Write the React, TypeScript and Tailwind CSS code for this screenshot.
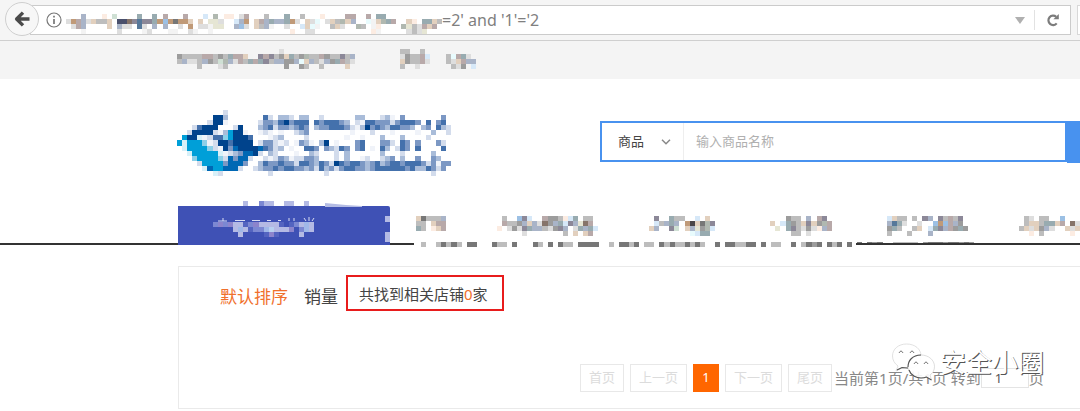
import React from "react";

const palette: Record<string, string> = {
  a: "#f3f3f3", b: "#dedede", c: "#bdbdbd", d: "#9c9c9c", e: "#777777", f: "#4a4648",
  g: "#cfe0d4", h: "#98abb0", i: "#56789a", j: "#4a506c", k: "#a9b4c8", l: "#d6e8f8",
  m: "#9cc0e4", n: "#8c8898", o: "#b8a9a9", p: "#fcece2", q: "#e2d0be", r: "#c09a78",
  s: "#86746a", t: "#e6e6d4", u: "#e8fbfd", v: "#b0b8b0",
  A: "#00438c", B: "#0068b4", C: "#009fd8", D: "#8ccfe8", E: "#d8f0f8",
  F: "#4471ac", G: "#7c98c4", H: "#a9bcd9", I: "#d3dcec", J: "#f0f3f9",
  K: "#7c88d2", L: "#b4bae4", M: "#8c84cc", N: "#5464c0", O: "#a0b8e8", P: "#b8d0f0",
};

type MosaicProps = { rows: string[]; cols: number; className: string };

/* Each row lists runs such as "12abc": a start column, then one colour key per cell. */
function Mosaic({ rows, cols, className }: MosaicProps) {
  return (
    <svg viewBox={`0 0 ${cols} ${rows.length}`} preserveAspectRatio="none" shapeRendering="crispEdges" className={className} aria-hidden="true">
      {rows.flatMap((row, y) =>
        row.split(" ").filter(Boolean).flatMap((run) => {
          const start = parseInt(run, 10);
          const keys = run.replace(/^\d+/, "");
          return [...keys].map((k, i) => (
            <rect key={`${y}-${start + i}`} x={start + i} y={y} width={1} height={1} fill={palette[k]} />
          ));
        })
      )}
    </svg>
  );
}

const addressRows = [
  "3k 7p 9g 14h 17h 19o 23o 27l 29v 31pp 34bo 39c 43h 46c 50p 55oo 59o 61hh",
  "0b 1rokb 5qccq 10jjsni 15nnhrmrerrq 26q 28ttb 33lkr 37qokhkk 43hrb 47qbu 51bqcvqk 59uaqvho 67qp 70hhqcc",
  "1bok 8q 10kbb 14ib 17k 19k 22b 24r 26bb 28att 33kmb 37qck 40a 43b 46lqua 52cqb 57vc 60ap 66vtcboqo",
  "3a 10b 15ab 20aa 24ba 28a 44p 47bb 60pa 67bcbt",
];

const topLeftRows = [
  "20b",
  "0dccccoocdchooqa 16noncdqhcdvccodccnck",
  "0ckbbckdcgvkbochohnckkddkuqkcbkdhocb",
  "4c 8bca 21d 24dc 28c 33q",
];
const topRightRows = ["0cc 4c", "0bdccol 9cuohb", "0qdccob 9cbqokk", "0c 3b 10cbd 14l"];

const logoRows = [
  "9I",
  "7AAH 17F 18I 20HHI 24HH 28I 35HH 40IH 42J 44G 52G",
  "6IAAJ 16IGGHFAGFFF 27FGFFFGH 35IJFFGGGIGFFFG 49F 51GF",
  "3IFAAA 11IA 16HGFIGGHGFG 27HGGFFFG 34IJHAGFGHFFGGH 48HG 51FH 53I",
  "2IAAAAIJHCAAJ 16JIJ 20J 23IHG 34J 38I 42J 47J 50H 53I",
  "1CAAEJIFFDCAAAF 18JIH 25I 33J 36J 40H 44H 49I",
  "0CECCCDJIAAFAAAA 16IGGI 20JI 23JGHJ 28HA 31J 35GF 40GGI 44FG 47G 51GI",
  "1ECCCCDIJAGBAAAAB 17FGIH 22J 25FFG 29GHIF 33G 35GF 38J 40FH 43IFG 47F 52F",
  "2ECCCCCEJIHGBBAI 18HI 23J 26HI 31I 33H 40H 44I 50H",
  "3DCCCCDIBGBBI 17IJIGHJI 24IGGH 31I 33H 36JI 40IHG 44H 47G 50GH",
  "4ICCCCGBBBG 16HFGGFGGIFFGHFGIAFGFFGHGFHGFFGFFFGIGJHG 52G",
  "5EBCCBBBI 15IHGGFGFFGGHGIFHGIGFFGGHGFFFFFFGFHHFGIG",
  "7EI 18I 29I 50I",
];

const navItems = [
  { id: 1, cols: 6, box: "ml-[25px] w-[30px]", rows: ["0qeccck", "0cc 3qoo", "0hc 3pqo", ""] },
  { id: 2, cols: 20, box: "ml-[51px] w-[101px]", rows: ["1c 4mnl 9oddc 13plh 17cc", "1occdkqkbsdkhlnkt 17so", "0p 2bdbnhkkcbdnk 15bhkhl", "5b 13c 15q 17qo"] },
  { id: 3, cols: 13, box: "ml-[51px] w-[66px]", rows: ["1n 4hcc 9l 11q", "1lckhk 7rfqevn", "0qk 4ng 7qktdvl", "8ul 10hh"] },
  { id: 4, cols: 12, box: "ml-[55px] w-[62px]", rows: ["3dcc 7k 9on", "0q 2lhdcqnqdvo", "1t 3hncbdbpko", "4cc 7b"] },
  { id: 5, cols: 16, box: "ml-[55px] w-[81px]", rows: ["0lqcc 5c 7nk 10ncocn", "0kihb 6b 9mrmokd", "0dhc 5cq 8lhnkodhd", "0c 4c 8k"] },
  { id: 6, cols: 13, box: "ml-[51px] w-[66px]", rows: ["1cb 4cc 8m", "1cqqchhqo 10sbq", "0cqb 3qdkb 9qbqc", "2p 4c 10p"] },
];

const rule = ["0c 3cecec 9ee 14ecc 18e 22ec 25e 27ecc 31eeee 37c 39eece 44cc 47ececcecec 58e 60eeccee 67e 69cc 73e 75cede 80ece 84e 86e 88ede 93ccccc 99deeedeeded"];

const tabRows = [
  "6L 9K 10LL 14LL 18L",
  "",
  "",
  "34L",
  "0KMKMLLNKMLLLLN 15NKLOL",
  "4LOLNKKOPLLLM 15M 17KOL",
  "5L 10NMN 17L 34L",
  "34L",
];

const pageButton = "h-[28px] border border-[#e8e8e8] px-[8px] text-[13px] text-[#dcdcdc]";

export default function App() {
  return (
    <div className="relative min-h-screen w-full overflow-hidden bg-white font-['Noto_Sans','Noto_Sans_CJK_SC',sans-serif] text-[#444]">
      <div className="flex h-[41px] items-start border-b border-[#cfcfcf] bg-[#f5f5f5] pt-[5px]">
        <button aria-label="Back" className="relative z-10 -mt-[3px] ml-[5px] flex h-[34px] w-[34px] shrink-0 items-center justify-center rounded-full border border-[#cfcfcf] bg-[#f7f7f7]">
          <svg viewBox="0 0 16 16" className="h-4 w-4" fill="none" stroke="#4b4b4b" strokeWidth="3.4" strokeLinejoin="round">
            <path d="M9 1.6 2.6 8 9 14.4M3 8h12.5" />
          </svg>
        </button>
        <div className="relative -ml-[9px] flex h-[30px] min-w-0 flex-1 items-center border border-[#cbcbcb] bg-white pl-[15px]">
          <svg viewBox="0 0 16 16" className="h-4 w-4 shrink-0" fill="none" stroke="#777" strokeWidth="1.2">
            <circle cx="8" cy="8" r="7" />
            <path d="M8 7v5M8 3.7v1.8" strokeWidth="1.7" />
          </svg>
          <Mosaic rows={addressRows} cols={74} className="ml-[4px] mt-[8px] h-[20px] w-[376px] shrink-0" />
          <input aria-label="Address" defaultValue="=2' and '1'='2" className="min-w-0 flex-1 bg-transparent text-[16px] leading-6 text-[#808080] outline-none" />
          <svg viewBox="0 0 10 7" className="mr-[9px] h-[7px] w-[10px] shrink-0" fill="#b0b0b0"><path d="M0 0h10L5 7z" /></svg>
          <div className="h-5 w-px bg-[#e2e2e2]" />
          <button aria-label="Reload" className="flex w-[35px] items-center justify-center">
            <svg viewBox="0 0 14 14" className="h-[14px] w-[14px]" fill="none" stroke="#7c7c7c" strokeWidth="2.2">
              <path d="M10.7 10.4A4.7 4.7 0 1 1 10.2 3.8" />
              <path d="M12.8 1v5.2H7.4z" fill="#7c7c7c" stroke="none" />
            </svg>
          </button>
        </div>
        <div className="ml-[6px] h-[30px] w-[3px] border-y border-l border-[#d8d8d8] bg-white" />
      </div>

      <div className="flex h-[38px] items-start bg-[#f4f4f4] pl-[177px] pt-[8px]">
        <Mosaic rows={topLeftRows} cols={36} className="h-[20px] w-[183px]" />
        <Mosaic rows={topRightRows} cols={16} className="ml-[40px] h-[20px] w-[81px]" />
      </div>

      <header className="flex items-start pl-[177px] pt-[31px]">
        <a href="#home" aria-label="Home"><Mosaic rows={logoRows} cols={54} className="h-[66px] w-[274px]" /></a>
        <form className="ml-[149px] mt-[11px] flex min-w-0 flex-1" onSubmit={(e) => e.preventDefault()}>
          <div className="flex h-[41px] min-w-0 flex-1 items-center border-2 border-[#4892ef]">
            <div className="relative flex h-full w-[82px] shrink-0 items-center border-r border-[#eeeeee]">
              <select aria-label="搜索类型" className="h-full w-full appearance-none bg-transparent pl-[16px] text-[13px] text-[#444] outline-none">
                <option>商品</option>
              </select>
              <svg viewBox="0 0 10 6" className="pointer-events-none absolute right-[12px] h-[6px] w-[10px]" fill="none" stroke="#888" strokeWidth="1.5"><path d="m1 .8 4 4 4-4" /></svg>
            </div>
            <input aria-label="输入商品名称" placeholder="输入商品名称" className="min-w-0 flex-1 px-[12px] text-[13px] outline-none placeholder:text-[#b0b0b0]" />
          </div>
          <button aria-label="搜索" className="h-[42px] w-[13px] shrink-0 bg-[#4892ef]" />
        </form>
      </header>

      <nav className="relative mt-[30px] flex h-[39px] border-b-2 border-[#333] pl-[178px]">
        <div className="relative h-[39px] w-[212px] shrink-0 rounded-tr-[2px] bg-[#3f51b5]">
          <Mosaic rows={tabRows} cols={35} className="absolute -top-[5px] left-[35px] h-[41px] w-[177px]" />
          <svg viewBox="0 0 213 39" className="absolute left-0 top-0 h-[39px] w-[213px]" fill="none" stroke="#d8dcf2" aria-hidden="true">
            <path d="M40 15h9M45 12v3M57 14.5h10M74 14.5h8M89 14.5h4M100 14.5h3M111 12v3M116 12v3M126 12l2 3M136 12l-2 3M131 11v4" />
          </svg>
          <svg viewBox="0 0 38 4" className="absolute -top-[3px] left-[146px] h-[4px] w-[38px]" fill="#b4bce4" aria-hidden="true"><path d="M1 0 22 2 38 3v1H1z" /></svg>
        </div>
        <div className="flex pl-px">
          {navItems.map((n) => (
            <a key={n.id} href={`#nav-${n.id}`} aria-label={`Category ${n.id}`} className={`mt-[10px] h-[20px] shrink-0 ${n.box}`}>
              <Mosaic rows={n.rows} cols={n.cols} className="h-full w-full" />
            </a>
          ))}
        </div>
        <div className="absolute -bottom-[4px] left-[414px] h-[7px] w-[442px] bg-white" />
        <Mosaic rows={rule} cols={111} className="absolute -bottom-[4px] left-[421px] h-[5px] w-[563px]" />
        <div className="absolute -bottom-[4px] left-[856px] right-0 h-[4px] border-t-2 border-[#333] bg-white" />
      </nav>

      <main className="ml-[178px] mt-[21px] h-[143px] border-y border-l border-[#eaeaea]">
        <div className="flex items-start pt-[8px]">
          <div className="ml-[41px] flex gap-[16px] pt-[10px] text-[17px] leading-6">
            <a href="#default" className="text-[#f0702c]">默认排序</a>
            <a href="#sales">销量</a>
          </div>
          <p className="ml-[8px] h-[36px] w-[158px] border-2 border-[#e81c1c] pl-[11px] text-[15px] leading-[34px]">
            共找到相关店铺<span className="text-[#f0702c]">0</span>家
          </p>
        </div>
        <div className="mt-[53px] flex h-[28px] items-center pl-[401px]">
          <div className="flex shrink-0 gap-[6px]">
            <button className={pageButton}>首页</button>
            <button className={pageButton}>上一页</button>
            <button className="h-[28px] w-[26px] bg-[#ff6600] text-[13px] text-white">1</button>
            <button className={pageButton}>下一页</button>
            <button className={pageButton}>尾页</button>
          </div>
          <label htmlFor="page" className="ml-[2px] shrink-0 whitespace-nowrap text-[15px] leading-6 text-[#888]">当前第1页/共1页 转到</label>
          <input id="page" defaultValue="1" className="h-[20px] w-[48px] shrink-0 border border-[#e4e4e4] px-[13px] text-[13px] text-[#555] outline-none" />
          <span className="text-[15px] leading-6 text-[#888]">页</span>
        </div>
      </main>

      <div className="pointer-events-none absolute left-[891px] top-[342px] flex items-center" aria-hidden="true">
        <svg viewBox="0 0 45 39" className="h-[39px] w-[45px]">
          <path d="M15.500 2C7.500 2 1.500 7 1.500 14c0 4 2 7.500 5.500 10l-2 5 6-3c8 2 19-1 19-12C30 7 24 2 15.500 2Z" fill="#fff" stroke="#d4d4d4" strokeWidth=".7" />
          <path d="M30 13c-7 0-13 5-13 11.500S23 36 30 36c2 0 4-.3 5.500-1l5 3-1.500-5c3-2 4.500-5 4.500-8.500C43.500 18 37.500 13 30 13Z" fill="#fff" fillOpacity=".9" stroke="#c8c8c8" strokeWidth=".6" />
          <path d="M17 25c0-6 4-12 13-12M18 28c2 6 8 8 12 8 2 0 4-.3 5.500-1l5 3M6 28l5-2.500 6 .500" fill="none" stroke="#555" strokeWidth="1.100" />
          <path d="M8 11q2-4 4 0M19 11q2-4 4 0M23 22q2-4 4 0M33 22q2-4 4 0" fill="none" stroke="#777" strokeWidth="1" />
        </svg>
        <span className="ml-[4px] whitespace-nowrap text-[26px] leading-8 text-white [text-shadow:1px_1px_0_#555]">安全小圈</span>
      </div>
    </div>
  );
}
